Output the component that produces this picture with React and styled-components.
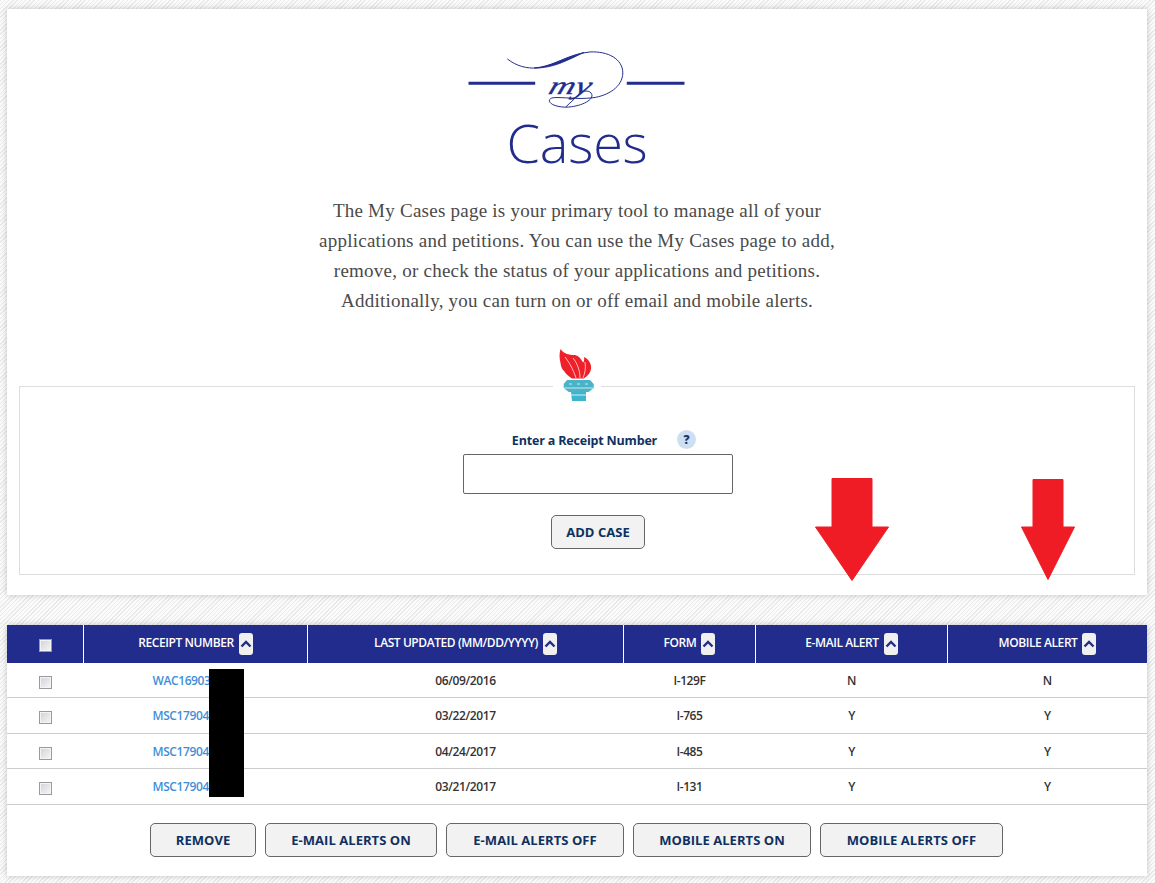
import React from "react";
import styled, { createGlobalStyle } from "styled-components";

const uiFont = `"Open Sans", "Noto Sans", sans-serif`;

const GlobalStyle = createGlobalStyle`
  html, body {
    margin: 0;
    padding: 0;
  }
  body {
    font-family: ${uiFont};
    background-color: #f6f6f6;
    background-image: repeating-linear-gradient(
      135deg,
      #eaeaea 0px,
      #eaeaea 1px,
      #fbfbfb 1px,
      #fbfbfb 3px
    );
  }
`;

const Page = styled.div`
  width: 1155px;
  height: 883px;
  box-sizing: border-box;
  padding: 9px 8px 7px 7px;
  overflow: hidden;
`;

const Card = styled.section`
  position: relative;
  background: #fff;
  box-shadow: 0 0 6px rgba(0, 0, 0, 0.22);
`;

const TopCard = styled(Card)`
  height: 586px;
  box-sizing: border-box;
  padding: 36px 12px 20px;
  margin-bottom: 30px;
  display: flex;
  flex-direction: column;
  align-items: center;
`;

const Logo = styled.svg`
  display: block;
  width: 240px;
  height: 70px;
`;

const Title = styled.h1`
  margin: -5px 0 0;
  font-family: "Open Sans", sans-serif;
  font-weight: 300;
  font-size: 54px;
  line-height: 64px;
  letter-spacing: -0.2px;
  color: #222c8c;
`;

const Intro = styled.p`
  margin: 22px 0 0;
  width: 560px;
  text-align: center;
  font-family: "Liberation Serif", serif;
  font-size: 19px;
  letter-spacing: 0.24px;
  line-height: 30px;
  color: #4a4a4a;
`;

const ReceiptBox = styled.div`
  position: relative;
  align-self: stretch;
  margin-top: 70px;
  height: 190px;
  box-sizing: border-box;
  border: 1px solid #ddd;
  padding: 43px 0 0 42px;
  display: flex;
  flex-direction: column;
  align-items: center;
`;

const TorchSlot = styled.div`
  position: absolute;
  top: -39px;
  left: 533px;
  width: 48px;
  height: 54px;
  background: #fff;
  display: flex;
  justify-content: center;
`;

const LabelRow = styled.div`
  display: flex;
  align-items: center;
  gap: 20px;
  height: 20px;
  margin: 0 0 4px 12px;
`;

const Label = styled.label`
  padding-top: 1px;
  font-weight: 700;
  font-size: 12.5px;
  letter-spacing: -0.18px;
  color: #0f3160;
`;

const Help = styled.span`
  width: 19px;
  height: 19px;
  border-radius: 50%;
  background: #cfdff2;
  color: #163a6d;
  font-weight: 800;
  font-size: 12px;
  display: flex;
  align-items: center;
  justify-content: center;
`;

const ReceiptInput = styled.input`
  display: block;
  width: 270px;
  height: 40px;
  box-sizing: border-box;
  border: 1px solid #666;
  border-radius: 2px;
  background: #fff;
`;

const ActionButton = styled.button`
  height: 34px;
  width: ${(p) => p.$width}px;
  padding: 0;
  box-sizing: border-box;
  border: 1px solid #666;
  border-radius: 5px;
  background: #f2f2f2;
  color: #0f3160;
  font-family: ${uiFont};
  font-weight: 700;
  font-size: 13px;
  letter-spacing: 0.05px;
`;

const AddButton = styled(ActionButton)`
  margin-top: 21px;
`;

const ArrowMark = styled.svg`
  position: absolute;
  top: ${(p) => p.$top}px;
  left: ${(p) => p.$left}px;
`;

const TableCard = styled(Card)`
  height: 251px;
`;

const CaseTable = styled.table`
  width: 100%;
  table-layout: fixed;
  border-collapse: collapse;
`;

const HeadCell = styled.th`
  height: 38px;
  padding: 0;
  width: ${(p) => (p.$width ? `${p.$width}px` : "auto")};
  background: #222c8c;
  border-left: 1px solid #fff;
  color: #fff;
  font-weight: 600;
  font-size: 12px;
  letter-spacing: -0.42px;
  text-align: center;

  &:first-child {
    border-left: 0;
  }
`;

const HeadInner = styled.div`
  display: flex;
  align-items: center;
  justify-content: center;
  gap: 5px;
`;

const HeadLabel = styled.span`
  margin-bottom: 3px;
`;

const SortButton = styled.span`
  width: 14px;
  height: 22px;
  border-radius: 3px;
  background: #f0f0f0;
  display: flex;
  align-items: center;
  justify-content: center;
`;

const Row = styled.tr`
  height: ${(p) => p.$height}px;
  border-bottom: 1px solid #ccc;
`;

const Cell = styled.td`
  padding: 1px 0 0;
  text-align: center;
  font-weight: 600;
  font-size: 12px;
  letter-spacing: -0.4px;
  color: #333;
`;

const CheckCell = styled(Cell)`
  padding: 3px 0 0;
`;

const CaseLink = styled.a`
  color: #3f8fd8;
  display: inline-block;
  width: 86px;
  text-align: left;
`;

const Check = styled.span`
  display: inline-block;
  vertical-align: middle;
  width: 13px;
  height: 13px;
  box-sizing: border-box;
  border: 1px solid #9a9a9a;
  box-shadow: inset 0 0 0 1px #f4f4f4;
  background: linear-gradient(135deg, #cfd3d8, #f6f6f6);
`;

const Redaction = styled.div`
  position: absolute;
  top: 44px;
  left: 202px;
  width: 35px;
  height: 128px;
  background: #000;
`;

const ButtonBar = styled.div`
  display: flex;
  justify-content: flex-start;
  gap: 9px;
  padding: 18px 0 0 143px;
`;

const columns = [
  { label: "RECEIPT NUMBER", width: 223 },
  { label: "LAST UPDATED (MM/DD/YYYY)", width: 315 },
  { label: "FORM", width: 131 },
  { label: "E-MAIL ALERT", width: 191 },
  { label: "MOBILE ALERT" },
];

const cases = [
  { id: "WAC16903", date: "06/09/2016", form: "I-129F", email: "N", mobile: "N", height: 34 },
  { id: "MSC17904", date: "03/22/2017", form: "I-765", email: "Y", mobile: "Y", height: 36 },
  { id: "MSC17904", date: "04/24/2017", form: "I-485", email: "Y", mobile: "Y", height: 35 },
  { id: "MSC17904", date: "03/21/2017", form: "I-131", email: "Y", mobile: "Y", height: 36 },
];

const bulkActions = [
  { label: "REMOVE", width: 106 },
  { label: "E-MAIL ALERTS ON", width: 172 },
  { label: "E-MAIL ALERTS OFF", width: 178 },
  { label: "MOBILE ALERTS ON", width: 178 },
  { label: "MOBILE ALERTS OFF", width: 183 },
];

function MyLogo() {
  return (
    <Logo viewBox="0 0 240 70">
      <g transform="translate(1 0)">
        <g fill="none" stroke="#222c8c">
          <path d="M10 38.5H77M169 38.5H227" strokeWidth="3" />
          <path
            d="M49 14C58 21 68 24 80 23C96 21 110 9 132 7C150 6 165 14 165 28C165 42 150 51 135 53C118 55 105 52 95 53C88 54 90 62 108 62.5C122 62 135 56 134 50C133 45 124 45 120 50C116 55 112 58 108 62"
            strokeWidth="1"
          />
        </g>
        <path d="M76 23C92 22 106 13 126 7.5C110 15 94 24 76 23Z" fill="#222c8c" stroke="#222c8c" strokeWidth="0.8" />
        <text
          transform="translate(89 49) skewX(-18) scale(1.45 1)"
          fill="#222c8c"
          stroke="#222c8c"
          strokeWidth="0.3"
          fontFamily="Liberation Serif"
          fontStyle="italic"
          fontSize="25"
        >
          my
        </text>
      </g>
    </Logo>
  );
}

function Torch() {
  return (
    <svg width="36" height="54" viewBox="0 0 36 54">
      <path
        d="M1.5 1C0 6 0.5 11 1.5 15C2 19 3 21 5 23C7 26 10 29 13 30.5H25C28 28 31 26 32 21C32.5 18 31.5 15 29.5 12.5C28.5 11 27 10 25 9C25.5 12 25 13.5 24 14.5C22 11 20 8 16 7C12 7 8 6.5 6 5C4 4 2.5 2.5 1.5 1Z"
        fill="#ef2029"
      />
      <path d="M6 9C10 14 14 21 17 30M14 10C18 15 21 22 21 30M26 14C27 20 26 25 24 30" stroke="#fff" strokeWidth="0.7" fill="none" />
      <path d="M8 32H31L34.7 36V40L29.7 44H9.7L4.7 40V36Z" fill="#49b4c8" />
      <path d="M5 40H34M10 36H13M18 36H21M26 36H29" stroke="#c9e9ef" strokeWidth="1" />
      <path d="M12 44H27V53H13Z" fill="#3eb4cf" />
      <path d="M11 47H28" stroke="#fff" strokeWidth="0.8" />
    </svg>
  );
}

function Arrow({ left, top, width, height, shaftLeft, shaftRight, neck }) {
  const mid = width / 2;
  return (
    <ArrowMark $left={left} $top={top} width={width} height={height} viewBox={`0 0 ${width} ${height}`}>
      <path
        d={`M${shaftLeft} 0.5H${shaftRight}V${neck}H${width - 0.5}L${mid} ${height - 0.5}L0.5 ${neck}H${shaftLeft}Z`}
        fill="#ef1c25"
        stroke="#ef1c25"
        strokeWidth="1"
        strokeLinejoin="round"
      />
    </ArrowMark>
  );
}

function Chevron() {
  return (
    <svg width="12" height="8" viewBox="0 0 12 8">
      <path d="M1.5 6.5L6 2L10.5 6.5" fill="none" stroke="#222c8c" strokeWidth="2.4" />
    </svg>
  );
}

export default function App() {
  return (
    <Page>
      <GlobalStyle />
      <TopCard>
        <MyLogo />
        <Title>Cases</Title>
        <Intro>
          The My Cases page is your primary tool to manage all of your
          applications and petitions. You can use the My Cases page to add,
          remove, or check the status of your applications and petitions.
          Additionally, you can turn on or off email and mobile alerts.
        </Intro>
        <ReceiptBox>
          <TorchSlot>
            <Torch />
          </TorchSlot>
          <LabelRow>
            <Label>Enter a Receipt Number</Label>
            <Help>?</Help>
          </LabelRow>
          <ReceiptInput type="text" />
          <AddButton $width={94}>ADD CASE</AddButton>
        </ReceiptBox>
        <Arrow left={808} top={469} width={74} height={103} shaftLeft={17} shaftRight={57} neck={49} />
        <Arrow left={1014} top={470} width={54} height={101} shaftLeft={12} shaftRight={42} neck={48} />
      </TopCard>
      <TableCard>
        <CaseTable>
          <thead>
            <tr>
              <HeadCell $width={76}>
                <Check />
              </HeadCell>
              {columns.map((col) => (
                <HeadCell key={col.label} $width={col.width}>
                  <HeadInner>
                    <HeadLabel>{col.label}</HeadLabel>
                    <SortButton>
                      <Chevron />
                    </SortButton>
                  </HeadInner>
                </HeadCell>
              ))}
            </tr>
          </thead>
          <tbody>
            {cases.map((c) => (
              <Row key={c.date} $height={c.height}>
                <CheckCell>
                  <Check />
                </CheckCell>
                <Cell>
                  <CaseLink>{c.id}</CaseLink>
                </Cell>
                <Cell>{c.date}</Cell>
                <Cell>{c.form}</Cell>
                <Cell>{c.email}</Cell>
                <Cell>{c.mobile}</Cell>
              </Row>
            ))}
          </tbody>
        </CaseTable>
        <Redaction />
        <ButtonBar>
          {bulkActions.map((a) => (
            <ActionButton key={a.label} $width={a.width}>
              {a.label}
            </ActionButton>
          ))}
        </ButtonBar>
      </TableCard>
    </Page>
  );
}
